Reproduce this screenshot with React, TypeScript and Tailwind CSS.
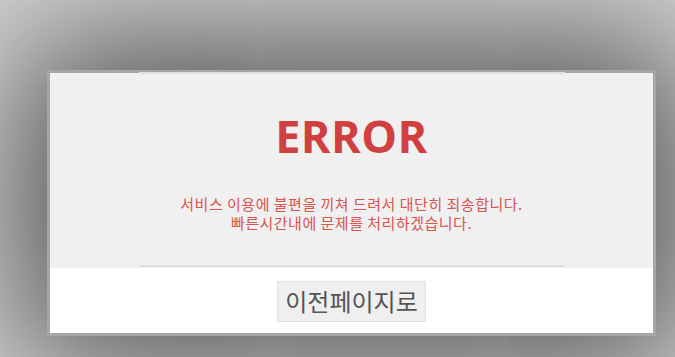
export default function App() {
  return (
    <div className="h-screen w-full bg-[#d6d6d6] overflow-hidden pt-[70px] pl-[47px]">
      <div className="w-[609px] h-[266px] border-[3px] border-[#a6a6a6] bg-white flex flex-col shadow-[0_0_140px_30px_rgba(0,0,0,0.62)]">
        <div className="bg-[#f0f0f0] h-[195px] flex justify-center">
          <div className="w-[426px] h-full border-t-2 border-b-2 border-[#e0e0e0] flex flex-col items-center -mt-[1px]">
            <div
              className="mt-[38px] text-[45px] leading-[48px] font-bold text-[#d04040] tracking-[0.5px]"
              style={{ fontFamily: '"Open Sans", "Noto Sans", sans-serif' }}
            >
              ERROR
            </div>
            <div
              className="mt-[34px] text-[15px] leading-[19px] text-[#d9534f] text-center tracking-[0.5px]"
              style={{ fontFamily: '"Noto Sans CJK KR", "Noto Sans", sans-serif' }}
            >
              <div>서비스 이용에 불편을 끼쳐 드려서 대단히 죄송합니다.</div>
              <div>빠른시간내에 문제를 처리하겠습니다.</div>
            </div>
          </div>
        </div>
        <div className="flex-1 flex items-center justify-center">
          <button
            className="h-[41px] px-[7px] bg-[#efefef] border border-[#e2e2e2] text-[24px] leading-[30px] text-[#555555] mt-[1px]"
            style={{ fontFamily: '"Noto Sans CJK KR", "Noto Sans", sans-serif' }}
          >
            이전페이지로
          </button>
        </div>
      </div>
    </div>
  );
}
